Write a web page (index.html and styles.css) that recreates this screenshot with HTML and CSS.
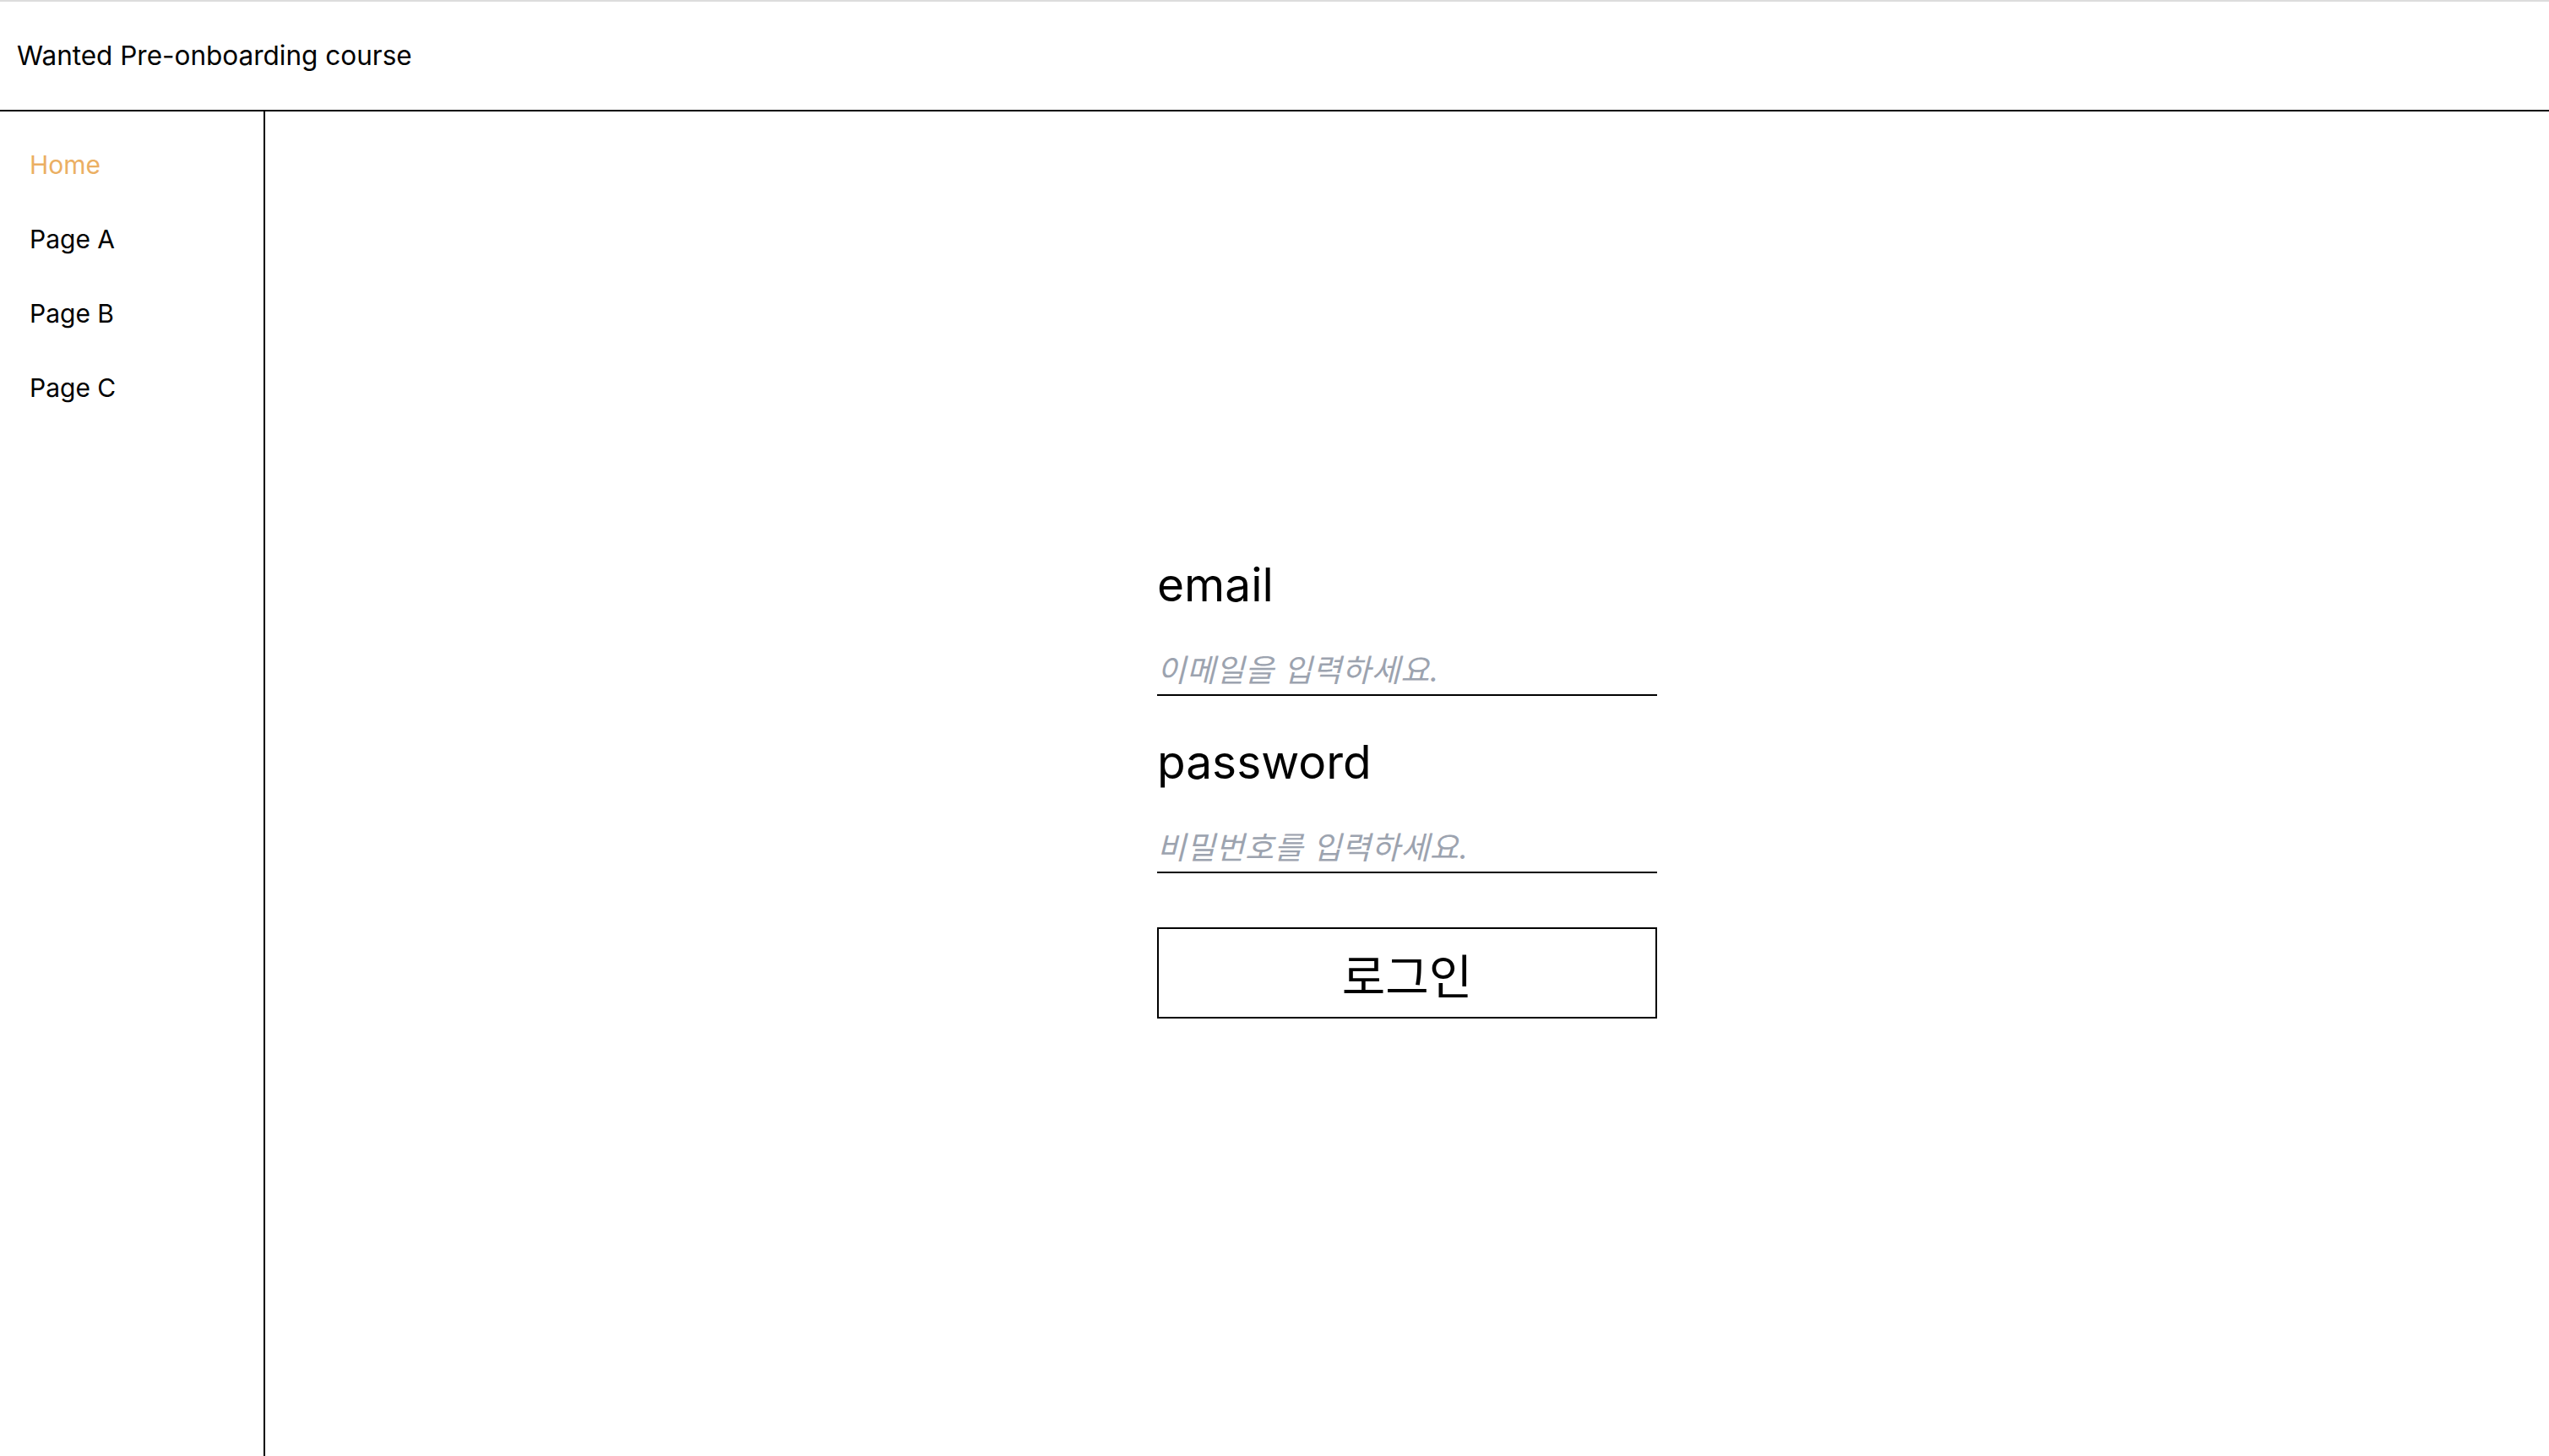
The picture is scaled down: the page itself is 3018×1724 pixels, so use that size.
FILE: index.html
```html
<!DOCTYPE html>
<html lang="ko">
<head>
<meta charset="utf-8">
<title>Wanted Pre-onboarding course</title>
<link rel="stylesheet" href="styles.css">
</head>
<body>
<header class="header">
  <span class="header-title">Wanted Pre-onboarding course</span>
</header>
<div class="layout">
  <nav class="sidebar">
    <ul class="nav-list">
      <li class="nav-item nav-item--active">Home</li>
      <li class="nav-item">Page A</li>
      <li class="nav-item">Page B</li>
      <li class="nav-item">Page C</li>
    </ul>
  </nav>
  <main class="main">
    <form class="login-form">
      <label class="field-label" for="email">email</label>
      <input class="field-input" id="email" type="text" placeholder="이메일을 입력하세요.">
      <label class="field-label field-label--second" for="password">password</label>
      <input class="field-input" id="password" type="password" placeholder="비밀번호를 입력하세요.">
      <button class="login-button" type="button">로그인</button>
    </form>
  </main>
</div>
</body>
</html>
```

FILE: styles.css
```css
* {
  box-sizing: border-box;
}

html, body {
  margin: 0;
  padding: 0;
  height: 100%;
}

body {
  font-family: Inter, "Noto Sans CJK KR", sans-serif;
  color: #000;
  background: #fff;
  overflow: hidden;
}

.header {
  height: 132px;
  border-top: 2px solid #dcdcdc;
  border-bottom: 2px solid #000;
  display: flex;
  align-items: center;
  padding-left: 20px;
}

.header-title {
  font-size: 31.5px;
  line-height: 1;
}

.layout {
  display: flex;
  height: calc(100vh - 132px);
}

.sidebar {
  width: 314px;
  flex: none;
  border-right: 2px solid #000;
  padding-top: 19px;
}

.nav-list {
  list-style: none;
  margin: 0;
  padding: 0 0 0 35px;
}

.nav-item {
  font-size: 30px;
  line-height: 88px;
  height: 88px;
  color: #000;
}

.nav-item--active {
  color: #ebaf63;
}

.main {
  flex: 1;
  display: flex;
  align-items: center;
  justify-content: center;
}

.login-form {
  width: 592px;
  display: flex;
  flex-direction: column;
}

.field-label {
  font-size: 55px;
  line-height: 84px;
  height: 84px;
}

.field-label--second {
  margin-top: 36px;
}

.field-input {
  margin: 30px 0 0;
  padding: 2px 0;
  border: none;
  border-bottom: 2px solid #000;
  font-family: Inter, "Noto Sans CJK KR", sans-serif;
  font-size: 37px;
  letter-spacing: 0.6px;
  line-height: 54px;
  height: 60px;
  outline: none;
  background: transparent;
}

.field-input::placeholder {
  color: #9ca3af;
  font-style: italic;
}

.login-button {
  margin-top: 64px;
  height: 108px;
  border: 2px solid #000;
  background: #fff;
  font-family: Inter, "Noto Sans CJK KR", sans-serif;
  font-size: 56px;
  color: #000;
  padding: 0;
}
```
